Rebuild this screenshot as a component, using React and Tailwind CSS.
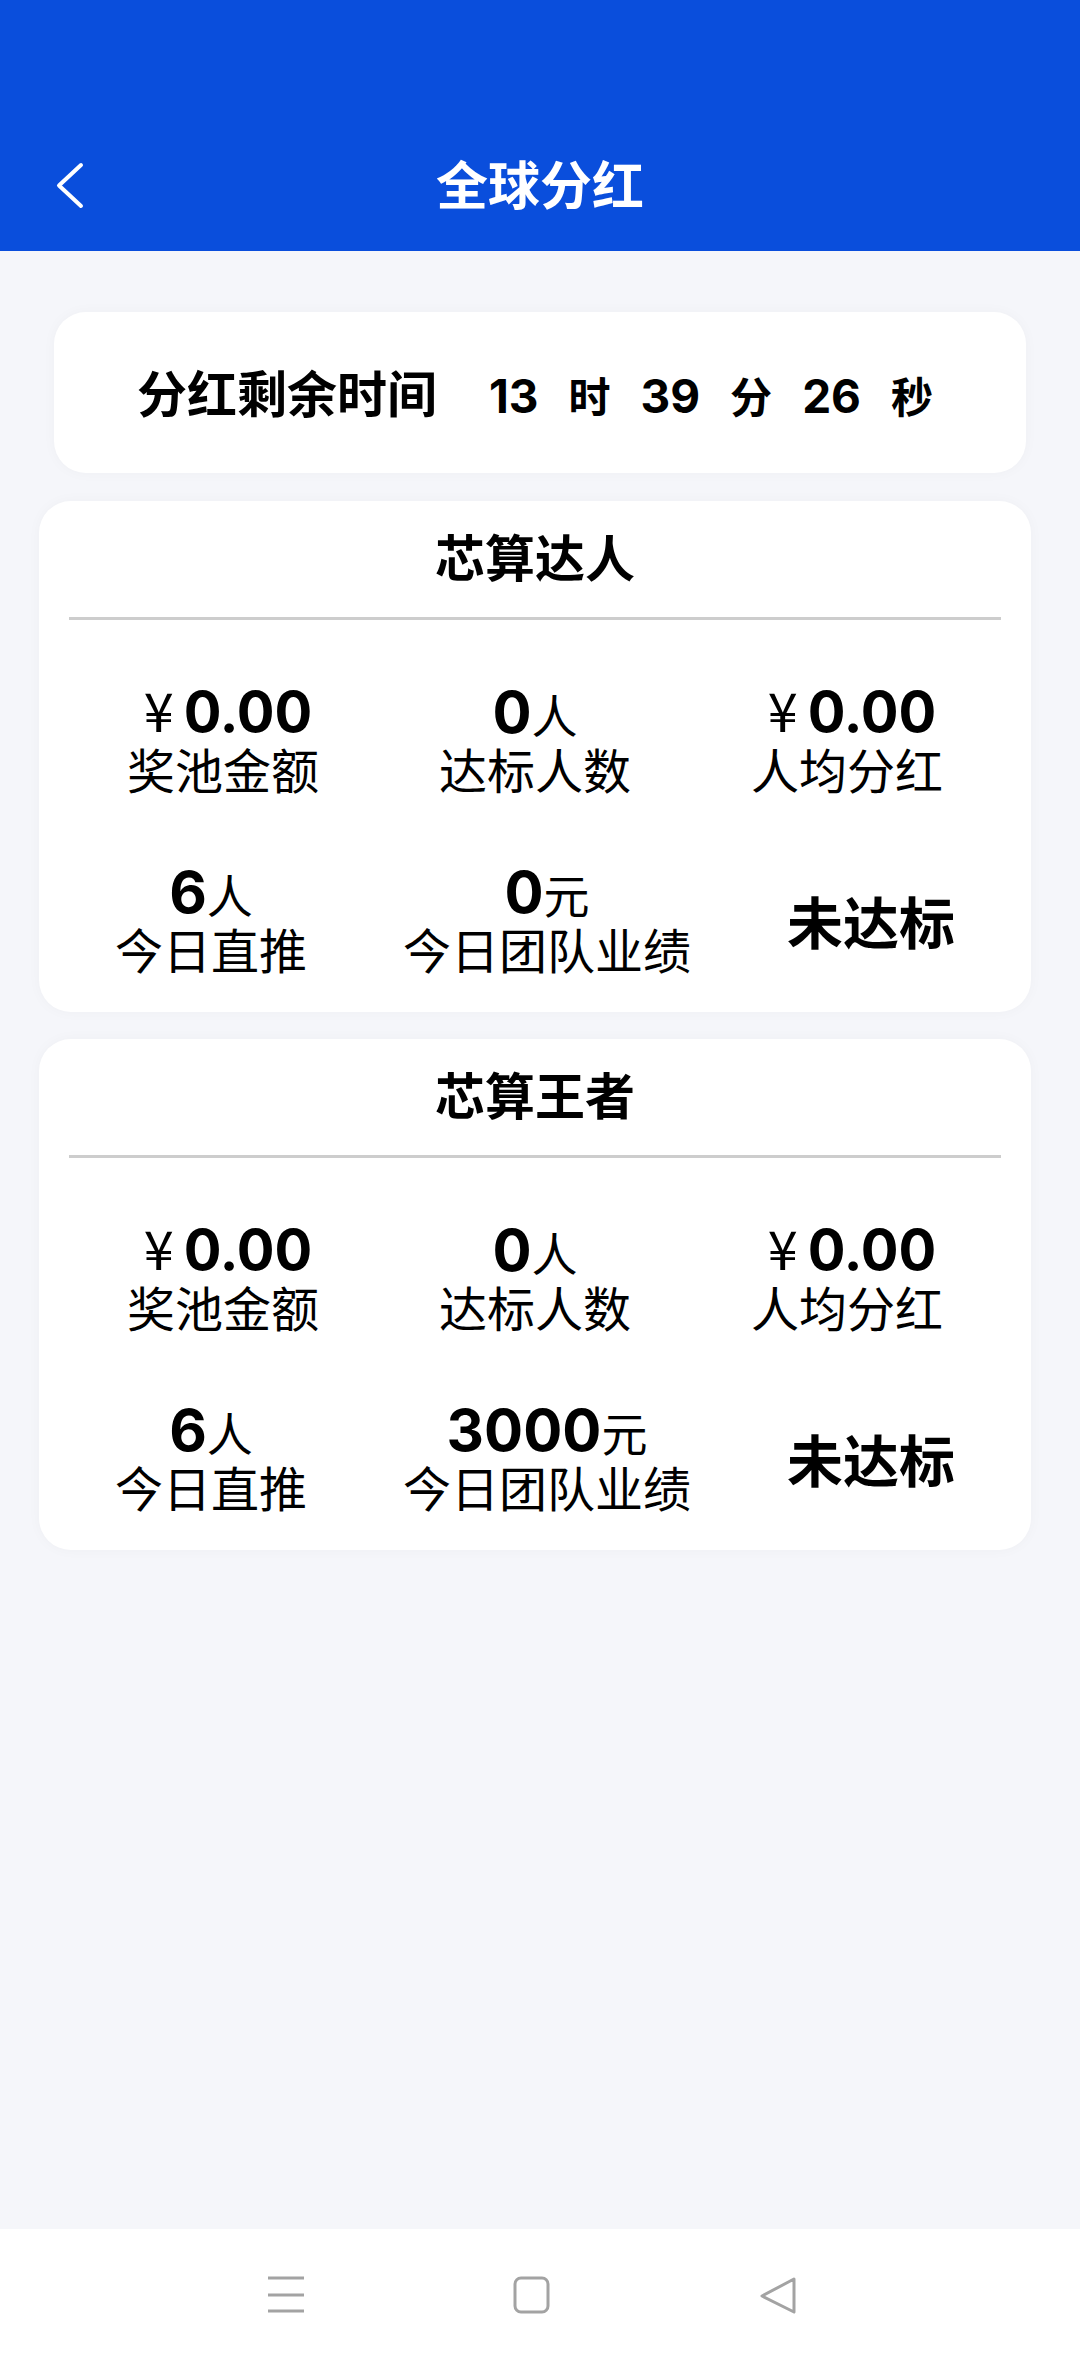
const cjk = { fontFamily: '"Noto Sans CJK SC", sans-serif' }
const num = { fontFamily: 'Inter, "Noto Sans CJK SC", sans-serif' }

const cards = [
  { title: '芯算达人', team: '0' },
  { title: '芯算王者', team: '3000' },
]

function Stat({ value, label }) {
  return (
    <div className="flex flex-col items-center">
      <div className="flex items-baseline">{value}</div>
      <div className="text-[48px] leading-[56px] text-black whitespace-nowrap" style={cjk}>
        {label}
      </div>
    </div>
  )
}

function Money() {
  return (
    <>
      <span className="text-[54px] leading-[40px] ml-[10px] mr-[10px]" style={cjk}>¥</span>
      <span className="text-[56px] leading-[56px] font-bold" style={num}>0.00</span>
    </>
  )
}

function Count({ n, unit }) {
  return (
    <>
      <span className="text-[58px] leading-[56px] font-bold" style={num}>{n}</span>
      <span className="text-[46px] leading-[40px]" style={cjk}>{unit}</span>
    </>
  )
}

function DividendCard({ title, team }) {
  return (
    <div className="ml-[39px] w-[992px] bg-white rounded-[32px] shadow-[0_0_14px_rgba(0,0,0,0.03)] text-black">
      <div className="h-[116px] flex items-center justify-center pb-[8px]">
        <h2 className="text-[50px] leading-none font-bold" style={cjk}>{title}</h2>
      </div>
      <div className="mx-[30px] h-[3px] bg-[#cdcdcd]" />
      <div className="px-[28px] pt-[64px] pb-[36px] flex flex-col gap-[68px]">
        <div className="flex justify-around">
          <Stat value={<Money />} label="奖池金额" />
          <Stat value={<Count n="0" unit="人" />} label="达标人数" />
          <Stat value={<Money />} label="人均分红" />
        </div>
        <div className="flex justify-around items-center">
          <Stat value={<Count n="6" unit="人" />} label="今日直推" />
          <Stat value={<Count n={team} unit="元" />} label="今日团队业绩" />
          <div className="text-[56px] leading-none font-bold whitespace-nowrap" style={cjk}>未达标</div>
        </div>
      </div>
    </div>
  )
}

function NavBar() {
  return (
    <div className="h-[133px] bg-white flex items-center justify-center gap-[208px] pb-[2px] pr-[14px]">
      <svg width="38" height="38" viewBox="0 0 38 38" className="-ml-[3px]">
        <g stroke="#a3a3a3" strokeWidth="3">
          <line x1="1" y1="2" x2="37" y2="2" />
          <line x1="1" y1="19" x2="37" y2="19" />
          <line x1="1" y1="35" x2="37" y2="35" />
        </g>
      </svg>
      <svg width="38" height="38" viewBox="0 0 38 38">
        <rect x="2" y="2" width="33" height="34" rx="6" fill="none" stroke="#a3a3a3" strokeWidth="3" />
      </svg>
      <svg width="38" height="38" viewBox="0 0 38 38">
        <path d="M35 3 L3 20 L35 36 Z" fill="none" stroke="#a3a3a3" strokeWidth="3" strokeLinejoin="round" />
      </svg>
    </div>
  )
}

export default function App() {
  return (
    <div className="w-[1080px] h-[2362px] flex flex-col bg-[#f5f6fa]">
      {/* header */}
      <div className="h-[251px] bg-[#0a4edc] pt-[120px]">
        <div className="h-[131px] grid grid-cols-[1fr_auto_1fr] items-center">
          <div className="pl-[54px] flex items-center">
            <svg width="32" height="51" viewBox="0 0 32 51">
              <polyline points="27,5 5,25.5 27,46" fill="none" stroke="white" strokeWidth="4" strokeLinecap="round" strokeLinejoin="round" />
            </svg>
          </div>
          <h1 className="text-[52px] leading-none font-bold text-white pb-[6px]" style={cjk}>全球分红</h1>
          <div />
        </div>
      </div>

      <div className="flex-1 pt-[61px] flex flex-col gap-[28px]">
        {/* countdown */}
        <div className="mx-[54px] h-[161px] bg-white rounded-[32px] shadow-[0_0_14px_rgba(0,0,0,0.03)] flex items-center justify-center pr-[10px]">
          <div className="flex items-baseline gap-[30px] text-black font-bold">
            <span className="text-[50px] leading-none mr-[22px]" style={cjk}>分红剩余时间</span>
            <span className="text-[46px] leading-none" style={num}>13</span>
            <span className="text-[42px] leading-none" style={cjk}>时</span>
            <span className="text-[46px] leading-none" style={num}>39</span>
            <span className="text-[42px] leading-none" style={cjk}>分</span>
            <span className="text-[46px] leading-none" style={num}>26</span>
            <span className="text-[42px] leading-none" style={cjk}>秒</span>
          </div>
        </div>

        <div className="flex flex-col gap-[27px]">
          {cards.map((c) => (
            <DividendCard key={c.title} title={c.title} team={c.team} />
          ))}
        </div>
      </div>

      <NavBar />
    </div>
  )
}
